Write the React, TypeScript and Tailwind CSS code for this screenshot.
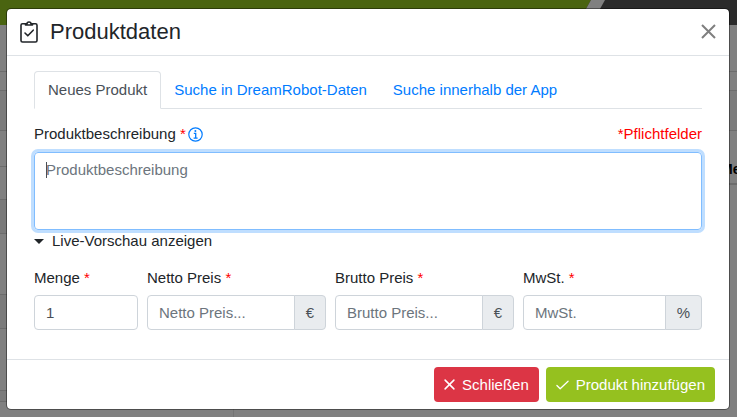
import type { ReactNode } from "react";

const leftRows = [
  "h-[47px] bg-[#808080]",
  "h-[19px] bg-[#808080]",
  "h-[40px] bg-[#7b7b7b]",
  "h-[36px] bg-[#808080]",
  "h-[33px] bg-[#808080]",
  "h-[34px] bg-[#797979]",
  "h-[61px] bg-[#808080]",
  "h-[34px] bg-[#7b7b7b]",
  "h-[62px] bg-[#808080]",
  "h-[11px] bg-[#7b7b7b]",
];

function Backdrop() {
  return (
    <div aria-hidden="true" className="absolute inset-0 flex flex-col overflow-hidden bg-[#808080]">
      <div className="flex h-[25px] shrink-0 bg-[#2b2b2b]">
        <div className="w-[79%] bg-[#4a6410]" />
        <svg className="h-[25px] w-[30px]" viewBox="0 0 30 25">
          <path d="M0 0H9L0 16Z" fill="#4a6410" />
          <path d="M9 0H23L9 25H0V16Z" fill="#808080" />
        </svg>
      </div>
      <div className="flex flex-1 justify-between">
        <div className="w-[234px] border-r border-[#747474]">
          {leftRows.map((row, i) => (
            <div key={i} className={`${row} border-b border-b-[#6c6c6c]`} />
          ))}
        </div>
        <div className="w-[16px] text-[14px] font-bold text-black">
          <div className="h-[47px] border-b border-[#6c6c6c]" />
          <div className="h-[19px] border-b border-[#6c6c6c]" />
          <div className="h-[40px] border-b border-[#6c6c6c] bg-[#7b7b7b]" />
          <div className="flex h-[54px] items-center border-b-2 border-[#6c6c6c] pt-6">Me</div>
        </div>
      </div>
    </div>
  );
}

function Star() {
  return <span className="text-[#ff0000]">*</span>;
}

function Field({ id, label, unit, value, placeholder }: { id: string; label: string; unit?: string; value?: string; placeholder?: string }) {
  return (
    <div className="min-w-0">
      <label htmlFor={id} className="mb-[6px] block">
        {label} <Star />
      </label>
      <div className="flex h-[35px]">
        <input
          id={id}
          defaultValue={value}
          placeholder={placeholder}
          className={`min-w-0 flex-1 border border-[#ced4da] bg-white px-[11px] text-[#495057] outline-none placeholder:text-[#6c757d] ${unit ? "rounded-l" : "rounded"}`}
        />
        {unit && (
          <span className="-ml-px flex items-center rounded-r border border-[#ced4da] bg-[#e9ecef] px-[11px] text-[#495057]">{unit}</span>
        )}
      </div>
    </div>
  );
}

function Tab({ children }: { children: ReactNode }) {
  return (
    <button role="tab" aria-selected="false" type="button" className="px-[13px] pt-px text-[#007bff]">
      {children}
    </button>
  );
}

export default function App() {
  return (
    <div className="relative min-h-screen py-2 pr-[7px] pl-[6px] font-['Liberation_Sans',Arial,sans-serif] text-[15px] leading-[22px] text-[#212529]">
      <Backdrop />
      <div role="dialog" aria-labelledby="title" className="relative rounded-[5px] border border-black/40 bg-white bg-clip-padding">
        <header className="flex h-[47px] items-center border-b border-[#dee2e6] px-[13px]">
          <svg className="h-[22px] w-[18px]" viewBox="0 0 18 22" fill="none" stroke="#212529" strokeWidth="1.6" strokeLinecap="round" strokeLinejoin="round">
            <path d="M5 2.8H2.5Q1 2.8 1 4.3V19.5Q1 21 2.5 21H15.5Q17 21 17 19.5V4.3Q17 2.8 15.5 2.8H13" />
            <path d="M5.5 4V2.8H7Q7 1 9 1Q11 1 11 2.8H12.5V4Z" />
            <path d="M5 12L7.8 14.8L13.2 9.2" />
          </svg>
          <h1 id="title" className="ml-3 flex-1 text-[22px] leading-8">Produktdaten</h1>
          <button type="button" aria-label="Schließen" className="pb-[2px] text-[#7f7f7f]">
            <svg className="size-[15px]" viewBox="0 0 15 15" fill="none" stroke="currentColor" strokeWidth="2">
              <path d="M1 1L14 14M14 1L1 14" />
            </svg>
          </button>
        </header>
        <main className="px-[27px] pt-[15px] pb-[29px]">
          <div role="tablist" className="flex h-[38px] border-b border-[#dee2e6]">
            <button role="tab" aria-selected="true" type="button" className="-mb-px rounded-t border border-[#dee2e6] border-b-white bg-white px-[13px] text-[#495057]">
              Neues Produkt
            </button>
            <Tab>Suche in DreamRobot-Daten</Tab>
            <Tab>Suche innerhalb der App</Tab>
          </div>
          <div className="mt-[14px] flex items-center justify-between">
            <div className="flex items-center">
              <label htmlFor="desc">
                Produktbeschreibung <Star />
              </label>
              <svg className="ml-[2px] size-[15px] text-[#007bff]" viewBox="0 0 15 15" fill="none" stroke="currentColor" strokeWidth="1.2">
                <circle cx="7.5" cy="7.5" r="6.7" />
                <path d="M5.8 6.4H7.7V11M5.6 11.2H9.6" strokeWidth="1.3" />
                <circle cx="7.4" cy="4" r="1" fill="currentColor" stroke="none" />
              </svg>
            </div>
            <span className="text-[#ff0000]">*Pflichtfelder</span>
          </div>
          <div className="relative mt-[7px]">
            <textarea
              id="desc"
              placeholder="Produktbeschreibung"
              className="block h-[78px] w-full resize-none rounded border border-[#80bdff] px-[11px] py-[6px] text-[#495057] shadow-[0_0_0_3px_#bfdeff] outline-none placeholder:text-[#6c757d]"
            />
            <span aria-hidden="true" className="pointer-events-none absolute top-[10px] left-3 h-4 w-px bg-[#495057]" />
          </div>
          <button type="button" className="flex items-center gap-2">
            <span className="border-x-[5px] border-t-[5px] border-x-transparent border-t-[#212529]" />
            Live-Vorschau anzeigen
          </button>
          <div className="mt-[15px] grid grid-cols-[104fr_179fr_179fr_179fr] gap-[9px]">
            <Field id="menge" label="Menge" value="1" />
            <Field id="netto" label="Netto Preis" unit="€" placeholder="Netto Preis..." />
            <Field id="brutto" label="Brutto Preis" unit="€" placeholder="Brutto Preis..." />
            <Field id="mwst" label="MwSt." unit="%" placeholder="MwSt." />
          </div>
        </main>
        <footer className="flex justify-end gap-[7px] border-t border-[#dee2e6] px-[14px] py-[7px] text-white">
          <button type="button" className="flex h-[35px] items-center gap-[7px] rounded bg-[#dc3545] px-[10px]">
            <svg className="size-[11px]" viewBox="0 0 10 10" fill="none" stroke="currentColor" strokeWidth="1.4" strokeLinecap="round">
              <path d="M1 1L9 9M9 1L1 9" />
            </svg>
            Schließen
          </button>
          <button type="button" className="flex h-[35px] items-center gap-[7px] rounded bg-[#95c11f] px-[10px]">
            <svg className="h-[10px] w-[13px]" viewBox="0 0 14 10" fill="none" stroke="currentColor" strokeWidth="1.4" strokeLinecap="round" strokeLinejoin="round">
              <path d="M1 5.5L4.5 9L13 1" />
            </svg>
            Produkt hinzufügen
          </button>
        </footer>
      </div>
    </div>
  );
}
